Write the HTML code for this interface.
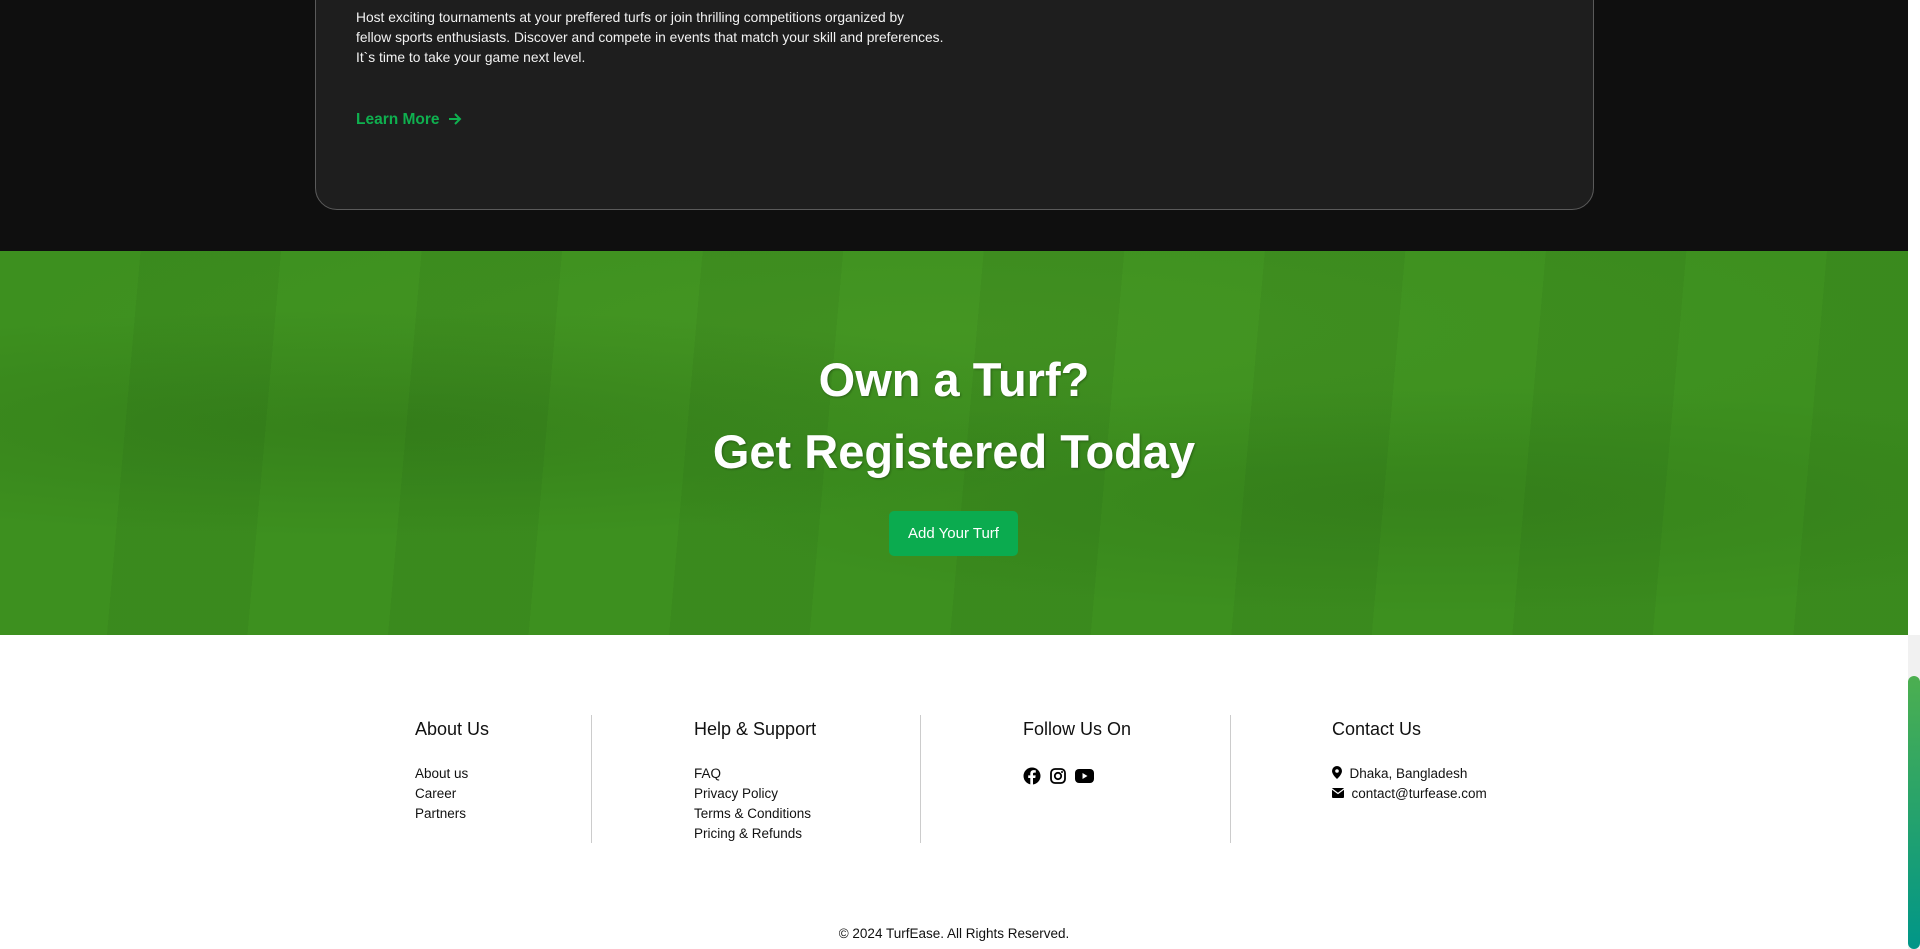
<!DOCTYPE html>
<html><head><meta charset="utf-8"><style>
*{margin:0;padding:0;box-sizing:border-box}
html,body{width:1920px;height:949px;overflow:hidden;background:#fff;font-family:"Liberation Sans",sans-serif}
.dark{position:absolute;left:0;top:0;width:1908px;height:251px;background:#0f0f0f}
.card{position:absolute;left:315px;top:-40px;width:1279px;height:250px;background:#1e1e1e;border:1px solid #5a5a5a;border-radius:22px}
.card p{position:absolute;left:40px;top:47px;white-space:nowrap;color:#f2f2f2;font-size:13.8px;line-height:20px}
.lm{position:absolute;left:40px;top:150px;color:#0fb04f;font-weight:bold;font-size:15.5px}
.grass{position:absolute;left:0;top:251px;width:1908px;height:384px;
background:
repeating-linear-gradient(95deg,rgba(0,0,0,0) 0 140px,rgba(0,30,0,.05) 140px 280px),
radial-gradient(ellipse 40% 30% at 20% 45%,rgba(20,60,5,.18),transparent),
radial-gradient(ellipse 40% 30% at 75% 65%,rgba(20,60,5,.15),transparent),
radial-gradient(ellipse 50% 40% at 50% 20%,rgba(120,190,60,.12),transparent),
#3d901f}
.h{position:absolute;left:0;width:1908px;text-align:center;color:#fff;font-weight:bold;font-size:47px;text-shadow:1px 1px 2px rgba(0,0,0,.3)}
.btn{position:absolute;left:889px;top:511px;width:129px;height:45px;background:#0bab4f;border-radius:5px;color:#fff;font-size:15px;text-align:center;line-height:45px}
.col{position:absolute;top:715px}
.col h4{font-weight:normal;font-size:18px;color:#111;margin-top:4px}
.col ul{list-style:none;margin-top:24px;font-size:13.5px;line-height:20px;color:#111}
.div{position:absolute;top:715px;width:1px;height:128px;background:#ccc}
.copy{position:absolute;top:926px;left:0;width:1908px;text-align:center;font-size:13.5px;color:#111}
.track{position:absolute;left:1908px;top:635px;width:12px;height:314px;background:#f1f1f1}
.thumb{position:absolute;left:1908px;top:676px;width:12px;height:273px;border-radius:6px;background:linear-gradient(#4caf50,#009688)}
</style></head><body>
<div class="dark"><div class="card">
<p>Host exciting tournaments at your preffered turfs or join thrilling competitions organized by<br>fellow sports enthusiasts. Discover and compete in events that match your skill and preferences.<br>It`s time to take your game next level.</p>
<div class="lm">Learn More &nbsp;<svg width="14" height="12" viewBox="0 0 14 12" style="vertical-align:-1px"><path d="M1 6h11M7 1l5 5-5 5" stroke="#0fb04f" stroke-width="2" fill="none"/></svg></div>
</div></div>
<div class="grass"></div>
<div class="h" style="top:352px">Own a Turf?</div>
<div class="h" style="top:424px">Get Registered Today</div>
<div class="btn">Add Your Turf</div>

<div class="col" style="left:415px"><h4>About Us</h4><ul><li>About us</li><li>Career</li><li>Partners</li></ul></div>
<div class="div" style="left:591px"></div>
<div class="col" style="left:694px"><h4>Help &amp; Support</h4><ul><li>FAQ</li><li>Privacy Policy</li><li>Terms &amp; Conditions</li><li>Pricing &amp; Refunds</li></ul></div>
<div class="div" style="left:920px"></div>
<div class="col" style="left:1023px"><h4>Follow Us On</h4>
<div style="margin-top:27px;display:flex;gap:9px;align-items:center">
<svg width="18" height="18" viewBox="0 0 18 18"><circle cx="9" cy="9" r="8.5" fill="#000"/><path d="M10 18V11h2.3l.4-2.6H10V6.9c0-.7.3-1.3 1.4-1.3h1.4V3.3s-1-.2-2.1-.2c-2.1 0-3.4 1.2-3.4 3.5v1.8H5.2V11h2.1v7z" fill="#fff"/></svg>
<svg width="16" height="16" viewBox="0 0 16 16"><rect x="1" y="1" width="14" height="14" rx="4" fill="none" stroke="#000" stroke-width="1.8"/><circle cx="8" cy="8" r="3.2" fill="none" stroke="#000" stroke-width="1.8"/><circle cx="12" cy="4" r="1" fill="#000"/></svg>
<svg width="19" height="14" viewBox="0 0 19 14"><rect x="0" y="0" width="19" height="14" rx="4" fill="#000"/><path d="M7.5 4v6l5-3z" fill="#fff"/></svg>
</div></div>
<div class="div" style="left:1230px"></div>
<div class="col" style="left:1332px"><h4>Contact Us</h4><ul>
<li><svg width="10" height="13" viewBox="0 0 10 13" style="vertical-align:-1px"><path d="M5 0a5 5 0 0 0-5 5c0 3.5 5 8 5 8s5-4.5 5-8a5 5 0 0 0-5-5z" fill="#000"/><circle cx="5" cy="5" r="1.8" fill="#fff"/></svg>&nbsp; Dhaka, Bangladesh</li>
<li><svg width="12" height="10" viewBox="0 0 12 10" style="vertical-align:0"><rect width="12" height="10" rx="1" fill="#000"/><path d="M0 1l6 4.5L12 1" stroke="#fff" stroke-width="1.2" fill="none"/></svg>&nbsp; contact@turfease.com</li></ul></div>
<div class="copy">© 2024 TurfEase. All Rights Reserved.</div>
<div class="track"></div><div class="thumb"></div>
</body></html>
